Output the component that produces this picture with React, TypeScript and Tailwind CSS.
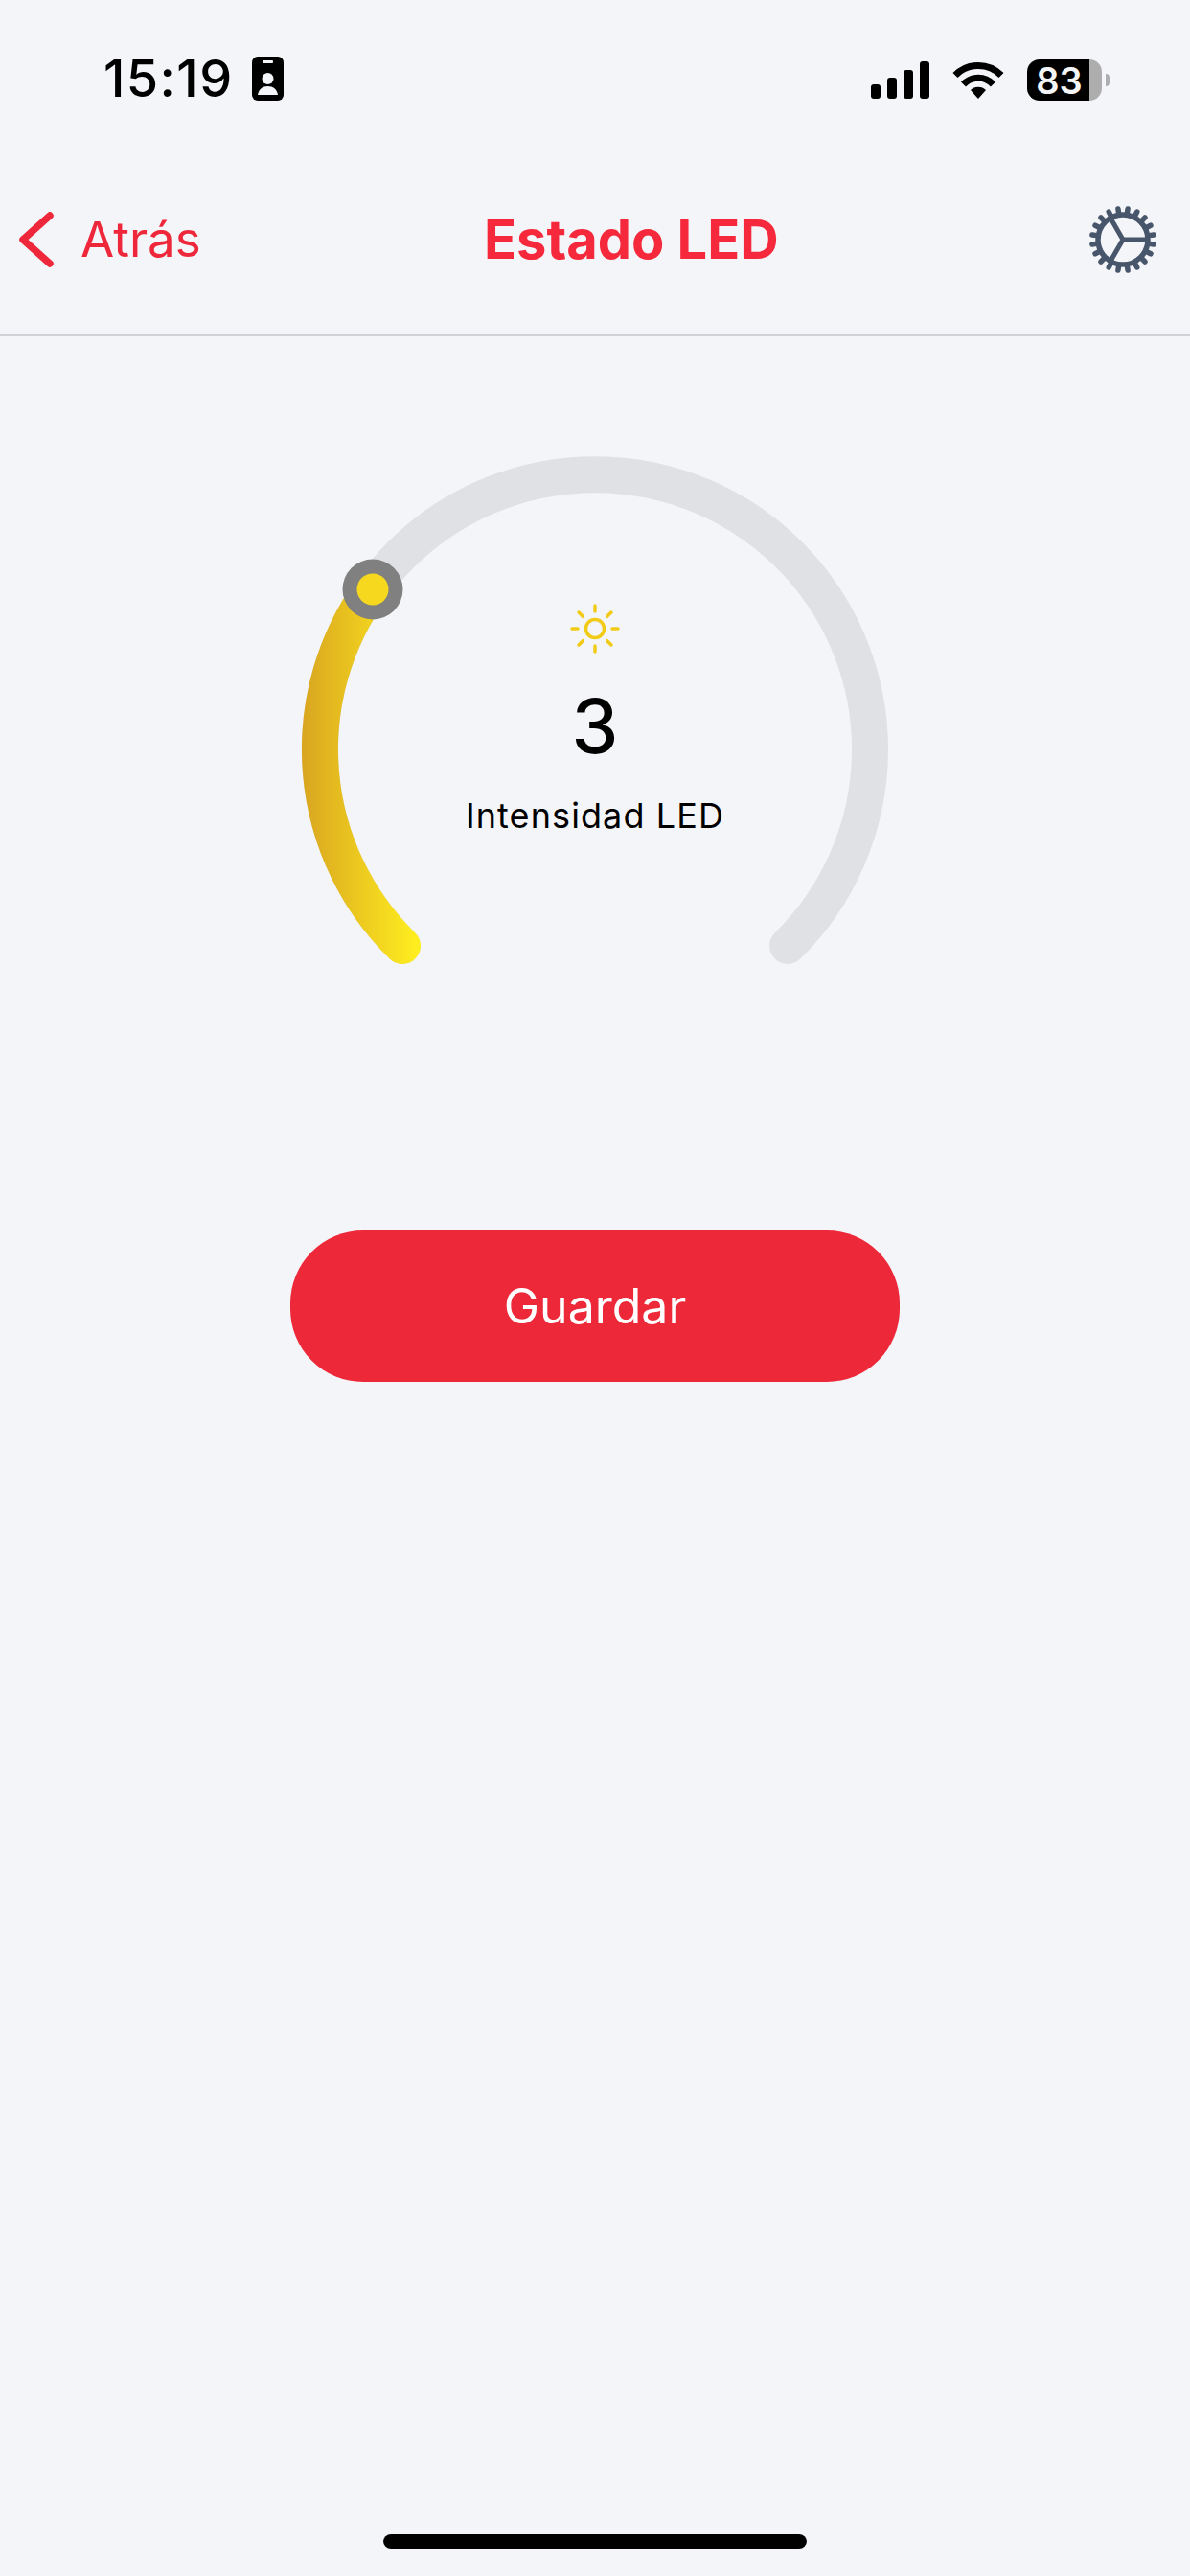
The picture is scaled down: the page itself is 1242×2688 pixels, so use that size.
const teeth = Array.from({ length: 20 }, (_, i) => i * 18 + 9);
const sunRays = [0, 45, 90, 135, 180, 225, 270, 315];

function IdBadge() {
  return (
    <svg width="33" height="46" viewBox="0 0 33 46">
      <rect width="33" height="46" rx="6" fill="#000" />
      <rect x="11" y="4" width="11" height="3" rx="1" fill="#f4f5f9" />
      <circle cx="16.5" cy="23" r="6" fill="#f4f5f9" />
      <path d="M6 40c1-6 5-9 10.500-9S26 34 27 40z" fill="#f4f5f9" />
    </svg>
  );
}

function SignalBars() {
  return (
    <div className="flex items-end gap-[7px]">
      <div className="w-[10px] h-[15px] rounded-[3px] bg-black" />
      <div className="w-[10px] h-[22px] rounded-[3px] bg-black" />
      <div className="w-[10px] h-[30px] rounded-[3px] bg-black" />
      <div className="w-[10px] h-[39px] rounded-[3px] bg-black" />
    </div>
  );
}

function Wifi() {
  return (
    <svg width="54" height="40" viewBox="0 0 54 40" fill="none" stroke="#000" strokeWidth="7">
      <path d="M3 14.500C16 1 38 1 51 14.500" />
      <path d="M11.500 24C20 15 34 15 42.500 24" />
      <path d="M19 30c4-4.500 12-4.500 16 0l-8 9z" fill="#000" stroke="none" />
    </svg>
  );
}

function Battery() {
  return (
    <div className="flex items-center gap-[4px]">
      <div className="flex w-[78px] h-[43px]">
        <div className="flex-1 rounded-l-[13px] bg-black flex items-center justify-center pl-[2px]">
          <span className="text-[38px] leading-none font-semibold text-[#f4f5f9] font-['Inter',sans-serif]">83</span>
        </div>
        <div className="w-[13px] rounded-r-[13px] bg-[#adadad]" />
      </div>
      <div className="w-[4px] h-[13px] rounded-r-[4px] bg-[#adadad]" />
    </div>
  );
}

function Gear() {
  return (
    <svg width="72" height="72" viewBox="0 0 72 72" fill="none" stroke="#47566b">
      <circle cx="36" cy="36" r="26" strokeWidth="5.500" />
      {teeth.map((a) => (
        <line
          key={a}
          x1="36"
          y1="8"
          x2="36"
          y2="3.500"
          strokeWidth="5.500"
          strokeLinecap="round"
          transform={`rotate(${a} 36 36)`}
        />
      ))}
      <path d="M36 36H62M36 36L23 13.500M36 36L23 58.500" strokeWidth="5" />
    </svg>
  );
}

function Sun() {
  return (
    <svg width="52" height="52" viewBox="0 0 52 52" fill="none" stroke="#f2cb17" strokeWidth="3.500" strokeLinecap="round">
      <circle cx="26" cy="26" r="9.500" />
      {sunRays.map((a) => (
        <line key={a} x1="26" y1="2" x2="26" y2="8" transform={`rotate(${a} 26 26)`} />
      ))}
    </svg>
  );
}

function Gauge() {
  return (
    <div className="relative w-[680px] h-[640px] mx-auto">
      <svg width="680" height="640" viewBox="0 0 680 640" fill="none">
        <defs>
          <linearGradient id="led" gradientUnits="userSpaceOnUse" x1="34" y1="0" x2="155" y2="0">
            <stop offset="0" stopColor="#d9a520" />
            <stop offset="1" stopColor="#ffee1f" />
          </linearGradient>
        </defs>
        <path d="M139 547A287 287 0 1 1 541 547" stroke="#e0e1e5" strokeWidth="38" strokeLinecap="round" />
        <path d="M139 547A287 287 0 0 1 107 174.400" stroke="url(#led)" strokeWidth="38" strokeLinecap="round" />
        <circle cx="108" cy="175" r="31.500" fill="#808080" />
        <circle cx="108" cy="175" r="16.500" fill="#f6d91f" />
      </svg>
      <div className="absolute inset-x-0 top-[190px] flex flex-col items-center font-['Inter',sans-serif] text-black">
        <Sun />
        <div className="mt-[32px] text-[78px] leading-[88px] font-medium">3</div>
        <div className="mt-[27px] text-[36px] leading-[44px] tracking-[1.1px]">Intensidad LED</div>
      </div>
    </div>
  );
}

export default function App() {
  return (
    <div className="w-[1242px] h-[2688px] bg-[#f4f5f9] flex flex-col font-['Inter',sans-serif] overflow-hidden">
      <div className="h-[160px] pt-[59px] pl-[108px] pr-[84px] flex justify-between items-start shrink-0">
        <div className="flex items-center gap-[19px]">
          <span className="text-[54px] leading-[46px] font-medium tracking-[1.4px] text-black">15:19</span>
          <IdBadge />
        </div>
        <div className="flex items-center gap-[24px] pt-[3px]">
          <SignalBars />
          <Wifi />
          <Battery />
        </div>
      </div>

      <div className="h-[191px] pb-[10px] pl-[20px] pr-[34px] flex items-center border-b-2 border-[#d0d1d6] shrink-0">
        <div className="w-[485px] flex items-center gap-[26px]">
          <svg width="38" height="58" viewBox="0 0 38 58" fill="none" stroke="#ee283a" strokeWidth="7.500" strokeLinecap="round" strokeLinejoin="round">
            <path d="M32 4L4 29L32 54" />
          </svg>
          <span className="text-[51px] leading-none text-[#ee283a]">Atrás</span>
        </div>
        <span className="text-[56px] leading-none font-bold text-[#f5283c]">Estado LED</span>
        <div className="ml-auto">
          <Gear />
        </div>
      </div>

      <div className="mt-[89px] shrink-0">
        <Gauge />
      </div>

      <button className="mt-[204px] mx-auto w-[636px] h-[158px] rounded-[76px] bg-[#ed2839] text-white text-[50px] shrink-0">
        Guardar
      </button>

      <div className="mt-auto mb-[28px] mx-auto w-[442px] h-[16px] rounded-full bg-black shrink-0" />
    </div>
  );
}
